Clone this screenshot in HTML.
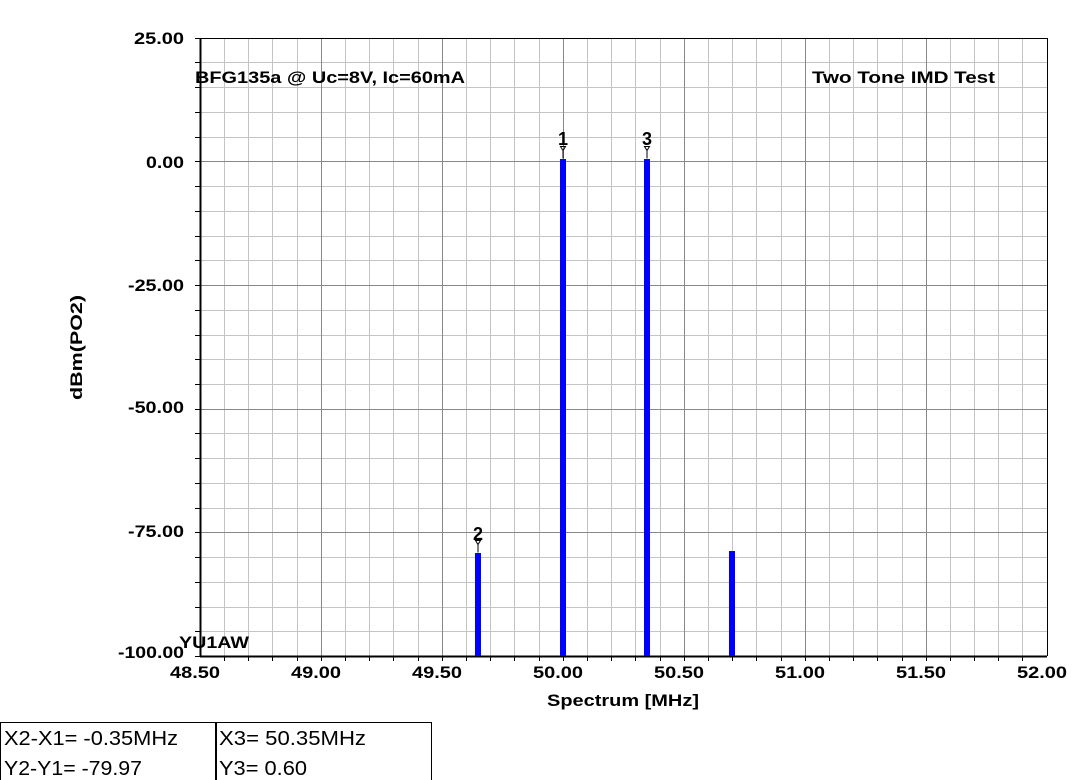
<!DOCTYPE html>
<html><head><meta charset="utf-8"><style>
html,body{margin:0;padding:0;background:#fff;width:1085px;height:780px;overflow:hidden}
svg{display:block}
text{font-family:"Liberation Sans",Arial,sans-serif}
</style></head><body>
<svg width="1085" height="780" viewBox="0 0 1085 780">
<path stroke="#c4c4c4" stroke-width="1" fill="none" d="
M224.5 38V656M248.5 38V656M272.5 38V656M297.5 38V656M345.5 38V656M369.5 38V656M393.5 38V656M418.5 38V656M466.5 38V656M490.5 38V656M514.5 38V656M539.5 38V656M587.5 38V656M611.5 38V656M635.5 38V656M660.5 38V656M708.5 38V656M732.5 38V656M756.5 38V656M781.5 38V656M829.5 38V656M853.5 38V656M877.5 38V656M902.5 38V656M950.5 38V656M974.5 38V656M998.5 38V656M1022.5 38V656
M200 62.5H1047M200 87.5H1047M200 112.5H1047M200 137.5H1047M200 186.5H1047M200 211.5H1047M200 236.5H1047M200 260.5H1047M200 310.5H1047M200 335.5H1047M200 359.5H1047M200 384.5H1047M200 433.5H1047M200 458.5H1047M200 483.5H1047M200 508.5H1047M200 557.5H1047M200 582.5H1047M200 607.5H1047M200 631.5H1047"/>
<path stroke="#888" stroke-width="1" fill="none" d="
M321.5 38V656M442.5 38V656M563.5 38V656M684.5 38V656M805.5 38V656M926.5 38V656
M200 161.5H1047M200 285.5H1047M200 409.5H1047M200 532.5H1047"/>
<path stroke="#000" stroke-width="1" fill="none" d="
M195 38.5H200M195 62.5H200M195 87.5H200M195 112.5H200M195 137.5H200M195 161.5H200M195 186.5H200M195 211.5H200M195 236.5H200M195 260.5H200M195 285.5H200M195 310.5H200M195 335.5H200M195 359.5H200M195 384.5H200M195 409.5H200M195 433.5H200M195 458.5H200M195 483.5H200M195 508.5H200M195 532.5H200M195 557.5H200M195 582.5H200M195 607.5H200M195 631.5H200M195 656.5H200
M224.5 656V661M248.5 656V661M272.5 656V661M297.5 656V661M321.5 656V661M345.5 656V661M369.5 656V661M393.5 656V661M418.5 656V661M442.5 656V661M466.5 656V661M490.5 656V661M514.5 656V661M539.5 656V661M563.5 656V661M587.5 656V661M611.5 656V661M635.5 656V661M660.5 656V661M684.5 656V661M708.5 656V661M732.5 656V661M756.5 656V661M781.5 656V661M805.5 656V661M829.5 656V661M853.5 656V661M877.5 656V661M902.5 656V661M926.5 656V661M950.5 656V661M974.5 656V661M998.5 656V661M1022.5 656V661"/>
<line x1="200.5" y1="38" x2="200.5" y2="657" stroke="#000" stroke-width="2"/>
<line x1="200" y1="656.5" x2="1047" y2="656.5" stroke="#000" stroke-width="2"/>
<line x1="200" y1="38.5" x2="1047" y2="38.5" stroke="#000"/>
<line x1="1047.5" y1="38" x2="1047.5" y2="656" stroke="#000"/>
<g font-weight="bold" font-size="17" fill="#000" lengthAdjust="spacingAndGlyphs">
<text x="134" y="44" textLength="50" lengthAdjust="spacingAndGlyphs">25.00</text>
<text x="146" y="168" textLength="38" lengthAdjust="spacingAndGlyphs">0.00</text>
<text x="128" y="291" textLength="56" lengthAdjust="spacingAndGlyphs">-25.00</text>
<text x="128" y="413" textLength="56" lengthAdjust="spacingAndGlyphs">-50.00</text>
<text x="128" y="537" textLength="56" lengthAdjust="spacingAndGlyphs">-75.00</text>
<text x="118" y="658" textLength="66" lengthAdjust="spacingAndGlyphs">-100.00</text>
<text x="170" y="678" textLength="50" lengthAdjust="spacingAndGlyphs">48.50</text>
<text x="291" y="678" textLength="50" lengthAdjust="spacingAndGlyphs">49.00</text>
<text x="412" y="678" textLength="50" lengthAdjust="spacingAndGlyphs">49.50</text>
<text x="533" y="678" textLength="50" lengthAdjust="spacingAndGlyphs">50.00</text>
<text x="654" y="678" textLength="50" lengthAdjust="spacingAndGlyphs">50.50</text>
<text x="775" y="678" textLength="50" lengthAdjust="spacingAndGlyphs">51.00</text>
<text x="896" y="678" textLength="50" lengthAdjust="spacingAndGlyphs">51.50</text>
<text x="1017" y="678" textLength="50" lengthAdjust="spacingAndGlyphs">52.00</text>
<text x="547" y="706" textLength="152" lengthAdjust="spacingAndGlyphs">Spectrum [MHz]</text>
<text transform="translate(82,400) rotate(-90)" textLength="105" lengthAdjust="spacingAndGlyphs">dBm(PO2)</text>
<text x="195" y="83" textLength="270" lengthAdjust="spacingAndGlyphs">BFG135a @ Uc=8V, Ic=60mA</text>
<text x="812" y="83" textLength="183" lengthAdjust="spacingAndGlyphs">Two Tone IMD Test</text>
<text x="179" y="648" textLength="70" lengthAdjust="spacingAndGlyphs">YU1AW</text>
</g>
<g fill="#0000ff">
<rect x="475" y="553" width="6" height="103"/>
<rect x="560" y="159" width="6" height="497"/>
<rect x="644" y="159" width="6" height="497"/>
<rect x="729" y="551" width="6" height="105"/>
</g>
<g fill="none" stroke="#000" stroke-width="1">
<path d="M560.5 146.5h5l-2.5 4z M563 150.5v8"/>
<path d="M644.5 146.5h5l-2.5 4z M647 150.5v8"/>
<path d="M475.5 540.5h5l-2.5 4z M478 544.5v8"/>
</g>
<g font-weight="bold" font-size="18" text-anchor="middle">
<text x="563" y="145">1</text>
<text x="647" y="145">3</text>
<text x="478" y="540">2</text>
</g>
<rect x="0.5" y="722.5" width="431" height="70" fill="none" stroke="#000"/>
<line x1="216" y1="722" x2="216" y2="780" stroke="#000" stroke-width="2"/>
<g font-size="20">
<text x="4" y="745" textLength="174" lengthAdjust="spacingAndGlyphs">X2-X1= -0.35MHz</text>
<text x="4" y="775" textLength="138" lengthAdjust="spacingAndGlyphs">Y2-Y1= -79.97</text>
<text x="219" y="745" textLength="147" lengthAdjust="spacingAndGlyphs">X3= 50.35MHz</text>
<text x="219" y="775" textLength="88" lengthAdjust="spacingAndGlyphs">Y3= 0.60</text>
</g>
</svg>
</body></html>
